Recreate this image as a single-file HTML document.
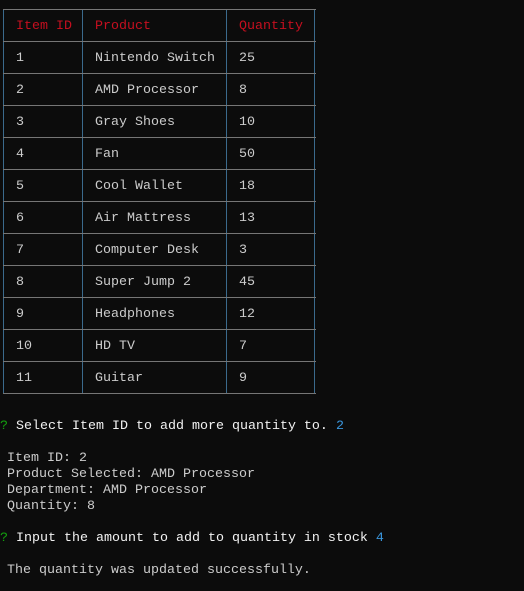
<!DOCTYPE html>
<html><head><style>
html,body{margin:0;padding:0;background:#0c0c0c;width:524px;height:591px;overflow:hidden}
body{position:relative;font-family:"Liberation Mono",monospace;font-size:13.33px;color:#cccccc}
.h{position:absolute;left:3px;width:313px;height:1px;background:#767676}
.v{position:absolute;top:9px;height:385px;width:1px;background:#3b6a8c}
.t{position:absolute;line-height:16px;white-space:pre}
.r{color:#c50f1f}
.g{color:#13a10e}
.b{color:#3a96dd}
.w{color:#f2f2f2}
.x{margin-top:2px}
</style></head><body>
<div class="v" style="left:3px"></div>
<div class="v" style="left:82px"></div>
<div class="v" style="left:226px"></div>
<div class="v" style="left:314px"></div>
<div class="h" style="top:9px"></div>
<div class="h" style="top:41px"></div>
<div class="h" style="top:73px"></div>
<div class="h" style="top:105px"></div>
<div class="h" style="top:137px"></div>
<div class="h" style="top:169px"></div>
<div class="h" style="top:201px"></div>
<div class="h" style="top:233px"></div>
<div class="h" style="top:265px"></div>
<div class="h" style="top:297px"></div>
<div class="h" style="top:329px"></div>
<div class="h" style="top:361px"></div>
<div class="h" style="top:393px"></div>

<div class="t r" style="left:16px;top:19px">Item ID</div>
<div class="t r" style="left:95px;top:19px">Product</div>
<div class="t r" style="left:239px;top:19px">Quantity</div>

<div class="t" style="left:16px;top:51px">1</div><div class="t" style="left:95px;top:51px">Nintendo Switch</div><div class="t" style="left:239px;top:51px">25</div>
<div class="t" style="left:16px;top:83px">2</div><div class="t" style="left:95px;top:83px">AMD Processor</div><div class="t" style="left:239px;top:83px">8</div>
<div class="t" style="left:16px;top:115px">3</div><div class="t" style="left:95px;top:115px">Gray Shoes</div><div class="t" style="left:239px;top:115px">10</div>
<div class="t" style="left:16px;top:147px">4</div><div class="t" style="left:95px;top:147px">Fan</div><div class="t" style="left:239px;top:147px">50</div>
<div class="t" style="left:16px;top:179px">5</div><div class="t" style="left:95px;top:179px">Cool Wallet</div><div class="t" style="left:239px;top:179px">18</div>
<div class="t" style="left:16px;top:211px">6</div><div class="t" style="left:95px;top:211px">Air Mattress</div><div class="t" style="left:239px;top:211px">13</div>
<div class="t" style="left:16px;top:243px">7</div><div class="t" style="left:95px;top:243px">Computer Desk</div><div class="t" style="left:239px;top:243px">3</div>
<div class="t" style="left:16px;top:275px">8</div><div class="t" style="left:95px;top:275px">Super Jump 2</div><div class="t" style="left:239px;top:275px">45</div>
<div class="t" style="left:16px;top:307px">9</div><div class="t" style="left:95px;top:307px">Headphones</div><div class="t" style="left:239px;top:307px">12</div>
<div class="t" style="left:16px;top:339px">10</div><div class="t" style="left:95px;top:339px">HD TV</div><div class="t" style="left:239px;top:339px">7</div>
<div class="t" style="left:16px;top:371px">11</div><div class="t" style="left:95px;top:371px">Guitar</div><div class="t" style="left:239px;top:371px">9</div>

<div class="t" style="left:0;top:419px"><span class="g">?</span> <span class="w">Select Item ID to add more quantity to.</span> <span class="b">2</span></div>
<div class="t" style="left:7px;top:451px">Item ID: 2</div>
<div class="t" style="left:7px;top:467px">Product Selected: AMD Processor</div>
<div class="t" style="left:7px;top:483px">Department: AMD Processor</div>
<div class="t" style="left:7px;top:499px">Quantity: 8</div>
<div class="t" style="left:0;top:531px"><span class="g">?</span> <span class="w">Input the amount to add to quantity in stock</span> <span class="b">4</span></div>
<div class="t" style="left:7px;top:563px">The quantity was updated successfully.</div>
</body></html>
